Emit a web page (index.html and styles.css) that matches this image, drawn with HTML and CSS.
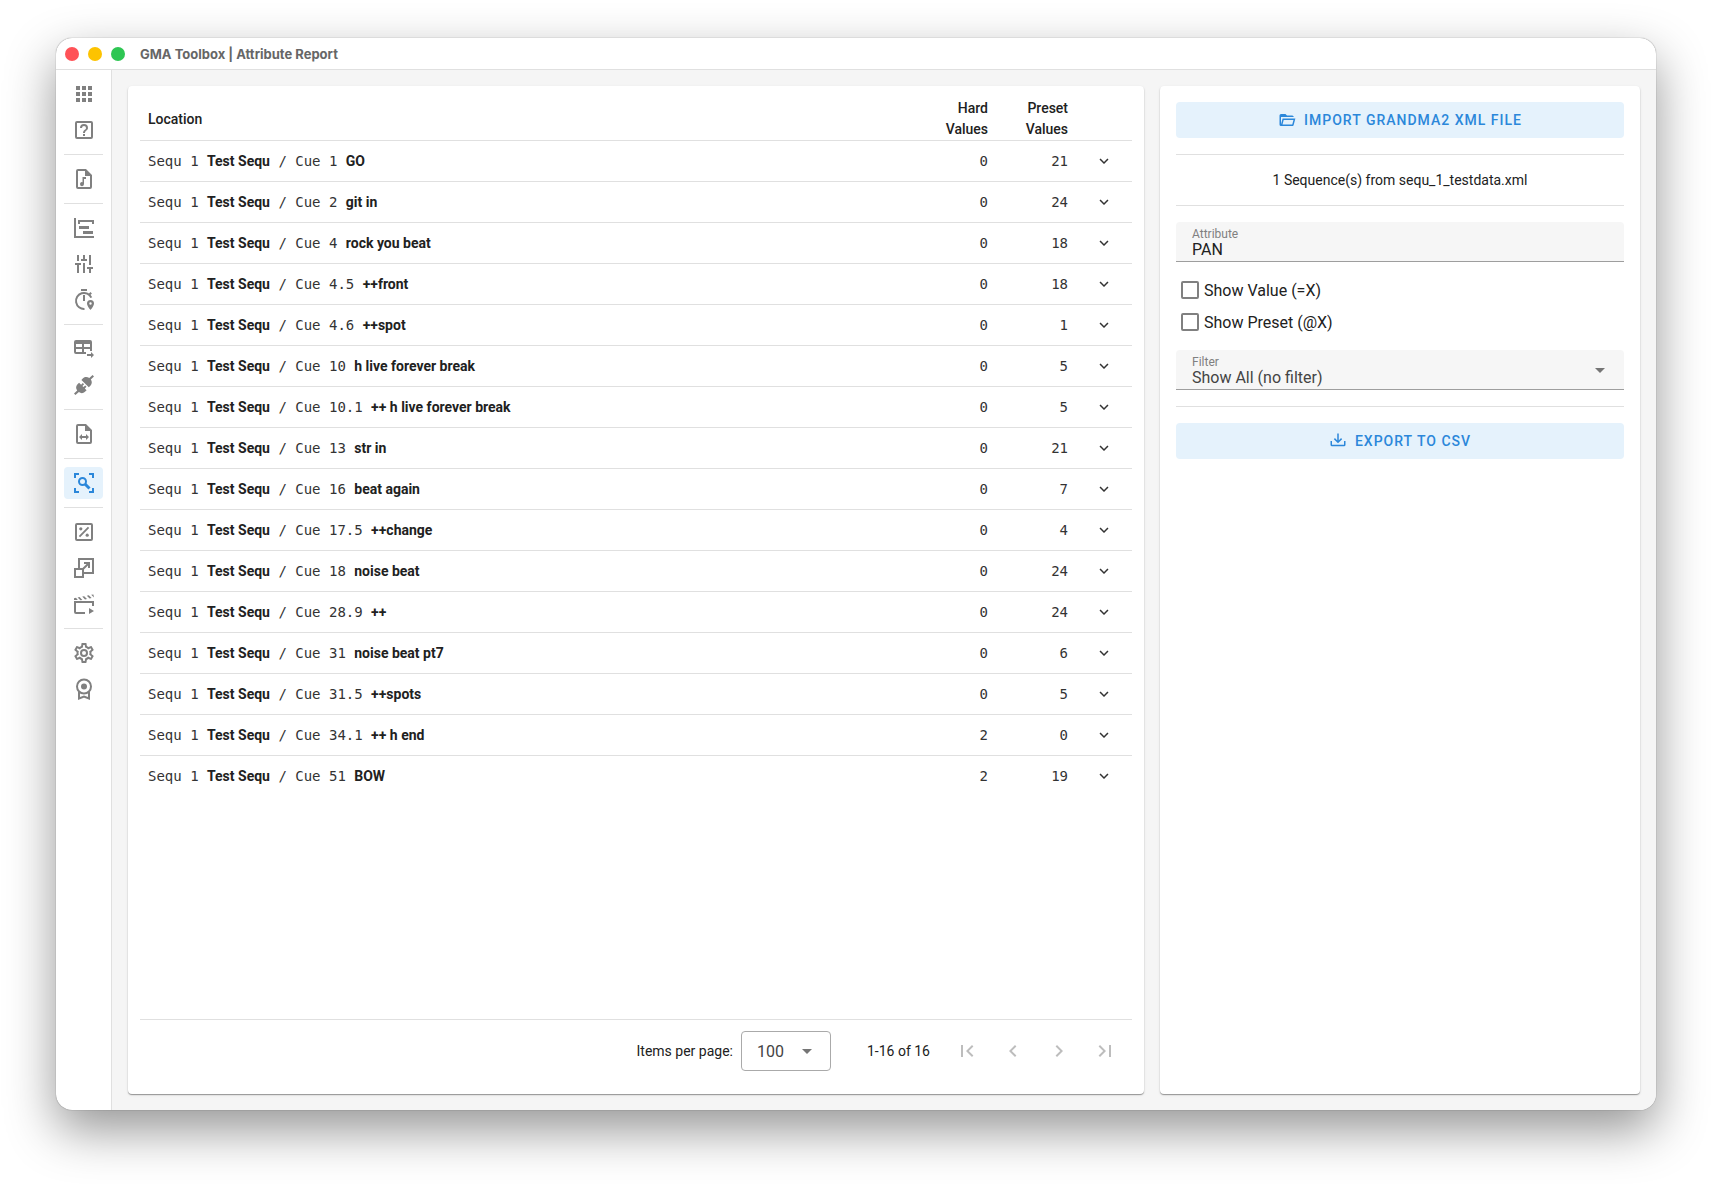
FILE: index.html
```html
<!DOCTYPE html>
<html lang="en">
<head>
    <meta charset="UTF-8">
    <meta name="viewport" content="width=device-width, initial-scale=1.0">
    <title>GMA Toolbox | Attribute Report</title>
    <link rel="stylesheet" href="styles.css">
</head>
<body>
    <svg class="sprite" aria-hidden="true">
        <symbol id="down" viewBox="0 0 24 24"><path d="M7.4 8.6 12 13.2l4.6-4.6L18 10l-6 6-6-6z"/></symbol>
        <symbol id="caret" viewBox="0 0 24 24"><path d="M7 10l5 5 5-5z"/></symbol>
    </svg>

    <div class="window">
        <header class="titlebar">
            <span class="dot red"></span>
            <span class="dot yellow"></span>
            <span class="dot green"></span>
            <h1>GMA Toolbox | Attribute Report</h1>
        </header>

        <div class="body">
            <nav class="sidebar">
                <button aria-label="Apps"><svg viewBox="0 0 24 24"><path d="M4 4h4v4H4zM10 4h4v4h-4zM16 4h4v4h-4zM4 10h4v4H4zM10 10h4v4h-4zM16 10h4v4h-4zM4 16h4v4H4zM10 16h4v4h-4zM16 16h4v4h-4z"/></svg></button>
                <button aria-label="Help"><svg viewBox="0 0 24 24"><path d="M11 18h2v-2h-2zM12 6a4 4 0 0 0-4 4h2a2 2 0 0 1 4 0c0 2-3 1.75-3 5h2c0-2.25 3-2.5 3-5a4 4 0 0 0-4-4M5 3h14a2 2 0 0 1 2 2v14a2 2 0 0 1-2 2H5a2 2 0 0 1-2-2V5a2 2 0 0 1 2-2m0 2v14h14V5z"/></svg></button>
                <hr>
                <button aria-label="Timecode"><svg viewBox="0 0 24 24"><path d="M14 2H6a2 2 0 0 0-2 2v16a2 2 0 0 0 2 2h12a2 2 0 0 0 2-2V8zm4 18H6V4h7v5h5zM10.500 10v5.200a2 2 0 1 0 1.500 1.900V12h2v-2z"/></svg></button>
                <hr>
                <button aria-label="Cue timeline"><svg viewBox="0 0 24 24"><path d="M2 2h2v18h18v2H2zM6 4h16v4h-2V6H8v2H6zM7 10h10v3H7zM11 15h10v3H11z"/></svg></button>
                <button aria-label="Faders"><svg viewBox="0 0 24 24"><path d="M5 3h2v6H5zM3 11h6v2H7v8H5v-8H3zM11 3h2v4h2v2H9V7h2zM11 11h2v10h-2zM17 3h2v10h-2zM15 15h6v2h-2v4h-2v-4h-2z"/></svg></button>
                <button aria-label="Timing"><svg viewBox="0 0 24 24"><path d="M9 1h6v2H9zM11 7h2v6h-2z"/><path class="line" d="M12.5 20.9A8 8 0 1 1 19.3 9.6M17.2 6.8l2-2"/><path d="M18.5 12a3.5 3.5 0 0 0-3.500 3.500c0 2.600 3.500 6.500 3.500 6.500s3.500-3.900 3.500-6.500a3.500 3.500 0 0 0-3.500-3.500m0 4.700a1.200 1.200 0 1 1 0-2.400 1.200 1.200 0 0 1 0 2.400"/></svg></button>
                <hr>
                <button aria-label="Layout export"><svg viewBox="0 0 24 24"><path d="M4 3h14a2 2 0 0 1 2 2v9h-2v-2h-6v3h2v2H4a2 2 0 0 1-2-2V5a2 2 0 0 1 2-2m0 4v3h6V7zm8 0v3h6V7zm-8 5v3h6v-3zM15 17h4v-2l3 3-3 3v-2h-4z"/></svg></button>
                <button aria-label="Patch"><svg viewBox="0 0 24 24"><path d="M2 20.600l3.200-3.200c-1.600-2-1.400-4.400.3-6.100l1.600-1.600 2 2 1.700-1.700 1.300 1.300-1.700 1.700 1.100 1.100 1.700-1.700 1.300 1.300-1.700 1.700 1.800 1.800-1.600 1.600c-1.700 1.700-4.200 1.800-6.100.3L3.400 22zM22 3.400l-3.200 3.200c1.500 2 1.300 4.400-.4 6.100l-1.600 1.600-7.400-7.400L11 5.300c1.700-1.700 4.400-1.600 6.300-.2L20.600 2z"/></svg></button>
                <hr>
                <button aria-label="File mapping"><svg viewBox="0 0 24 24"><path d="M14 2H6a2 2 0 0 0-2 2v16a2 2 0 0 0 2 2h12a2 2 0 0 0 2-2V8zm4 18H6V4h7v5h5zM10 12v2h4v-2l3 3-3 3v-2h-4v2l-3-3z"/></svg></button>
                <hr>
                <button class="active" aria-label="Attribute report"><svg viewBox="0 0 24 24"><path d="M2 2h5v2H4v3H2zM17 2h5v5h-2V4h-3zM2 17h2v3h3v2H2zM20 17h2v5h-5v-2h3z"/><circle class="line" cx="10.500" cy="10.500" r="3.500"/><path class="line thick" d="M13 13l4.500 4.500"/></svg></button>
                <hr>
                <button aria-label="Percent"><svg viewBox="0 0 24 24"><path d="M5 3h14a2 2 0 0 1 2 2v14a2 2 0 0 1-2 2H5a2 2 0 0 1-2-2V5a2 2 0 0 1 2-2m0 2v14h14V5zM15.900 6.800l1.300 1.300-9.100 9.100-1.300-1.300z"/><circle cx="8.800" cy="8.800" r="1.600"/><circle cx="15.200" cy="15.200" r="1.600"/></svg></button>
                <button aria-label="Resize"><svg viewBox="0 0 24 24"><path d="M6 2h16v16H12v4H2V12h4zm2 2v8h4v4h8V4zM4 14v6h6v-6zM12 6h6v6h-2V9.400l-4.300 4.300-1.400-1.400L14.600 8H12z"/></svg></button>
                <button aria-label="Movie"><svg viewBox="0 0 24 24"><path d="M2 9h20v5h-2v-3H4v9h9v2H4a2 2 0 0 1-2-2zM17 16l5 3-5 3zM2 6.200l2-.4L5.800 8H2zM5.600 5.500l2-.4 2.800 2.800-2 .4zM10.200 4.600l2-.4L15 7l-2 .4zM14.800 3.700l2-.4 2.800 2.800-2 .4zM19.200 2.800l2.200-.4.6 3z"/></svg></button>
                <hr>
                <button aria-label="Settings"><svg viewBox="0 0 24 24"><path d="M12 8a4 4 0 1 1 0 8 4 4 0 0 1 0-8m0 2a2 2 0 1 0 0 4 2 2 0 0 0 0-4m-2 12c-.25 0-.46-.18-.5-.42l-.37-2.65c-.63-.25-1.17-.59-1.69-.99l-2.49 1.01c-.22.08-.49 0-.61-.22l-2-3.46c-.13-.22-.07-.49.12-.64l2.11-1.66L4.500 12l.07-1-2.110-1.630c-.19-.15-.25-.42-.12-.64l2-3.460c.12-.22.39-.31.61-.22l2.490 1c.52-.39 1.060-.73 1.690-.98l.37-2.650c.04-.24.25-.42.5-.42h4c.25 0 .46.18.5.42l.37 2.650c.63.25 1.170.59 1.690.98l2.490-1c.22-.09.49 0 .61.22l2 3.460c.13.22.07.49-.12.64L19.430 11l.07 1-.07 1 2.110 1.630c.19.15.25.42.12.64l-2 3.460c-.12.22-.39.31-.61.22l-2.490-1c-.52.39-1.060.73-1.690.98l-.37 2.650c-.04.24-.25.42-.5.42zm1.250-18-.37 2.610c-1.200.25-2.260.89-3.030 1.780L5.440 7.350l-.75 1.300L6.800 10.200a5.600 5.600 0 0 0 0 3.600l-2.120 1.560.75 1.300 2.430-1.040c.77.88 1.820 1.520 3.010 1.760l.37 2.620h1.520l.37-2.610c1.190-.25 2.240-.89 3.010-1.770l2.430 1.040.75-1.300-2.120-1.550c.4-1.170.4-2.440 0-3.610l2.110-1.550-.75-1.300-2.410 1.040a5.400 5.400 0 0 0-3.030-1.770L12.750 4z"/></svg></button>
                <button aria-label="License"><svg viewBox="0 0 24 24"><circle class="line" cx="12" cy="9.500" r="7"/><circle cx="12" cy="9.500" r="3"/><path class="line" d="M7 15v6.500l5-2 5 2V15"/></svg></button>
            </nav>

            <main class="content">
                <section class="card report">
                    <table>
                        <thead>
                            <tr><th>Location</th><th class="num">Hard Values</th><th class="num">Preset Values</th><th class="toggle"></th></tr>
                        </thead>
                        <tbody>
                            <tr><td>Sequ 1 <b>Test Sequ</b> / Cue 1 <b>GO</b></td><td class="num">0</td><td class="num">21</td><td class="toggle"><button aria-label="Expand"><svg><use href="#down"/></svg></button></td></tr>
                            <tr><td>Sequ 1 <b>Test Sequ</b> / Cue 2 <b>git in</b></td><td class="num">0</td><td class="num">24</td><td class="toggle"><button aria-label="Expand"><svg><use href="#down"/></svg></button></td></tr>
                            <tr><td>Sequ 1 <b>Test Sequ</b> / Cue 4 <b>rock you beat</b></td><td class="num">0</td><td class="num">18</td><td class="toggle"><button aria-label="Expand"><svg><use href="#down"/></svg></button></td></tr>
                            <tr><td>Sequ 1 <b>Test Sequ</b> / Cue 4.5 <b>++front</b></td><td class="num">0</td><td class="num">18</td><td class="toggle"><button aria-label="Expand"><svg><use href="#down"/></svg></button></td></tr>
                            <tr><td>Sequ 1 <b>Test Sequ</b> / Cue 4.6 <b>++spot</b></td><td class="num">0</td><td class="num">1</td><td class="toggle"><button aria-label="Expand"><svg><use href="#down"/></svg></button></td></tr>
                            <tr><td>Sequ 1 <b>Test Sequ</b> / Cue 10 <b>h live forever break</b></td><td class="num">0</td><td class="num">5</td><td class="toggle"><button aria-label="Expand"><svg><use href="#down"/></svg></button></td></tr>
                            <tr><td>Sequ 1 <b>Test Sequ</b> / Cue 10.1 <b>++ h live forever break</b></td><td class="num">0</td><td class="num">5</td><td class="toggle"><button aria-label="Expand"><svg><use href="#down"/></svg></button></td></tr>
                            <tr><td>Sequ 1 <b>Test Sequ</b> / Cue 13 <b>str in</b></td><td class="num">0</td><td class="num">21</td><td class="toggle"><button aria-label="Expand"><svg><use href="#down"/></svg></button></td></tr>
                            <tr><td>Sequ 1 <b>Test Sequ</b> / Cue 16 <b>beat again</b></td><td class="num">0</td><td class="num">7</td><td class="toggle"><button aria-label="Expand"><svg><use href="#down"/></svg></button></td></tr>
                            <tr><td>Sequ 1 <b>Test Sequ</b> / Cue 17.5 <b>++change</b></td><td class="num">0</td><td class="num">4</td><td class="toggle"><button aria-label="Expand"><svg><use href="#down"/></svg></button></td></tr>
                            <tr><td>Sequ 1 <b>Test Sequ</b> / Cue 18 <b>noise beat</b></td><td class="num">0</td><td class="num">24</td><td class="toggle"><button aria-label="Expand"><svg><use href="#down"/></svg></button></td></tr>
                            <tr><td>Sequ 1 <b>Test Sequ</b> / Cue 28.9 <b>++</b></td><td class="num">0</td><td class="num">24</td><td class="toggle"><button aria-label="Expand"><svg><use href="#down"/></svg></button></td></tr>
                            <tr><td>Sequ 1 <b>Test Sequ</b> / Cue 31 <b>noise beat pt7</b></td><td class="num">0</td><td class="num">6</td><td class="toggle"><button aria-label="Expand"><svg><use href="#down"/></svg></button></td></tr>
                            <tr><td>Sequ 1 <b>Test Sequ</b> / Cue 31.5 <b>++spots</b></td><td class="num">0</td><td class="num">5</td><td class="toggle"><button aria-label="Expand"><svg><use href="#down"/></svg></button></td></tr>
                            <tr><td>Sequ 1 <b>Test Sequ</b> / Cue 34.1 <b>++ h end</b></td><td class="num">2</td><td class="num">0</td><td class="toggle"><button aria-label="Expand"><svg><use href="#down"/></svg></button></td></tr>
                            <tr><td>Sequ 1 <b>Test Sequ</b> / Cue 51 <b>BOW</b></td><td class="num">2</td><td class="num">19</td><td class="toggle"><button aria-label="Expand"><svg><use href="#down"/></svg></button></td></tr>
                        </tbody>
                    </table>

                    <footer class="pager">
                        <label for="per-page">Items per page:</label>
                        <div class="select outlined">
                            <select id="per-page"><option>100</option></select>
                            <svg><use href="#caret"/></svg>
                        </div>
                        <span class="range">1-16 of 16</span>
                        <button disabled aria-label="First page"><svg viewBox="0 0 24 24"><path d="M18.400 16.600 13.800 12l4.600-4.600L17 6l-6 6 6 6zM6 6h2v12H6z"/></svg></button>
                        <button disabled aria-label="Previous page"><svg viewBox="0 0 24 24"><path d="M15.400 16.600 10.800 12l4.600-4.600L14 6l-6 6 6 6z"/></svg></button>
                        <button disabled aria-label="Next page"><svg viewBox="0 0 24 24"><path d="M8.600 16.600 13.200 12 8.600 7.400 10 6l6 6-6 6z"/></svg></button>
                        <button disabled aria-label="Last page"><svg viewBox="0 0 24 24"><path d="M5.600 7.400l4.600 4.600-4.600 4.600L7 18l6-6-6-6zM16 6h2v12h-2z"/></svg></button>
                    </footer>
                </section>

                <aside class="card options">
                    <button class="action">
                        <svg viewBox="0 0 24 24"><path d="M6.100 10 4 18V8h17a2 2 0 0 0-2-2h-7l-2-2H4a2 2 0 0 0-2 2v12a2 2 0 0 0 2 2h15c.9 0 1.700-.6 1.900-1.500l2.300-8.500zM19 18H6l1.600-6h13z"/></svg>
                        IMPORT GRANDMA2 XML FILE
                    </button>
                    <hr>
                    <p>1 Sequence(s) from sequ_1_testdata.xml</p>
                    <hr>
                    <div class="field">
                        <label for="attribute">Attribute</label>
                        <input id="attribute" type="text" value="PAN">
                    </div>
                    <div class="checks">
                        <label><input type="checkbox"> Show Value (=X)</label>
                        <label><input type="checkbox"> Show Preset (@X)</label>
                    </div>
                    <div class="field select">
                        <label for="filter">Filter</label>
                        <select id="filter"><option>Show All (no filter)</option></select>
                        <svg><use href="#caret"/></svg>
                    </div>
                    <hr>
                    <button class="action">
                        <svg viewBox="0 0 24 24"><path d="M2 12h2v5h16v-5h2v5a2 2 0 0 1-2 2H4a2 2 0 0 1-2-2zM12 15l5.500-5.500-1.400-1.400-3.100 3.100V2h-2v9.200L7.900 8.100 6.500 9.500z"/></svg>
                        EXPORT TO CSV
                    </button>
                </aside>
            </main>
        </div>
    </div>
</body>
</html>
```
FILE: styles.css
```css
* {
    box-sizing: border-box;
}

body {
    display: flex;
    min-height: 100vh;
    margin: 0;
    padding: 38px 56px 74px;
    background: #fff;
    color: #212121;
    font-family: Roboto, sans-serif;
    font-size: 14px;
}

button,
input,
select {
    font: inherit;
    color: inherit;
}

button {
    display: flex;
    align-items: center;
    justify-content: center;
    padding: 0;
    border: 0;
    background: none;
}

svg {
    width: 24px;
    height: 24px;
    fill: currentColor;
}

.line {
    fill: none;
    stroke: currentColor;
    stroke-width: 2;
}

.thick {
    stroke-width: 3;
}

.sprite {
    position: absolute;
    width: 0;
    height: 0;
}

hr {
    width: 100%;
    height: 1px;
    margin: 0;
    border: 0;
    background: #e0e0e0;
}

.window {
    flex: 1;
    display: flex;
    flex-direction: column;
    border-radius: 16px;
    overflow: hidden;
    background: #fff;
    box-shadow: 0 0 1px rgba(0, 0, 0, 0.6), 0 20px 50px rgba(0, 0, 0, 0.42);
}

.titlebar {
    display: flex;
    align-items: center;
    gap: 9px;
    height: 32px;
    padding: 0 9px;
    border-bottom: 1px solid #e0e0e0;
}

.titlebar h1 {
    margin: 0 0 0 6px;
    color: #666;
    font-family: Inter, sans-serif;
    font-size: 13px;
    font-weight: 700;
}

.dot {
    width: 14px;
    height: 14px;
    border-radius: 50%;
}

.red {
    background: #ff5257;
}

.yellow {
    background: #fdc300;
}

.green {
    background: #2ec653;
}

.body {
    flex: 1;
    display: flex;
}

.sidebar {
    display: flex;
    flex-direction: column;
    align-items: center;
    width: 56px;
    padding: 6px 8px;
    border-right: 1px solid #e0e0e0;
    color: #808080;
}

.sidebar button {
    width: 100%;
    height: 32px;
    margin: 2px 0;
    border-radius: 4px;
}

.sidebar .active {
    background: #e5f2fc;
    color: #2b87da;
}

.sidebar hr {
    margin: 6px 0;
}

.content {
    flex: 1;
    display: flex;
    gap: 16px;
    padding: 16px;
    background: #f5f5f5;
}

.card {
    border-radius: 4px;
    background: #fff;
    box-shadow: 0 1px 1px rgba(0, 0, 0, 0.35), 0 1px 3px rgba(0, 0, 0, 0.1);
}

.report {
    flex: 1;
    display: flex;
    flex-direction: column;
    padding: 12px;
}

table {
    width: 100%;
    table-layout: fixed;
    border-spacing: 0;
}

th,
td {
    padding: 0 8px;
    border-bottom: 1px solid #e0e0e0;
    text-align: left;
}

th {
    height: 42px;
    font-weight: 500;
    line-height: 21px;
}

td {
    height: 41px;
    color: #333;
    font-family: "DejaVu Sans Mono", monospace;
    line-height: 20px;
}

tr:last-child td {
    height: 40px;
    border-bottom: 0;
}

td b {
    color: #212121;
    font-family: Roboto, sans-serif;
    font-weight: 700;
}

.num {
    width: 80px;
    text-align: right;
}

.toggle {
    width: 56px;
}

.toggle button {
    width: 40px;
    height: 24px;
}

.toggle svg {
    width: 18px;
    height: 18px;
}

.pager {
    display: flex;
    align-items: center;
    justify-content: flex-end;
    height: 63px;
    margin-top: auto;
    padding: 0 4px;
    border-top: 1px solid #e0e0e0;
}

.select {
    position: relative;
}

.select select {
    appearance: none;
    width: 100%;
    border: 0;
    background: none;
    color: #444;
    font-size: 16px;
}

.select svg {
    position: absolute;
    top: 8px;
    right: 12px;
    color: #757575;
    pointer-events: none;
}

.outlined {
    width: 90px;
    height: 40px;
    margin: 0 36px 0 8px;
}

.outlined select {
    height: 100%;
    padding: 0 15px;
    border: 1px solid #aaa;
    border-radius: 4px;
}

.range {
    margin-right: 14px;
}

.pager button {
    width: 46px;
    height: 40px;
    color: #bdbdbd;
}

.options {
    width: 480px;
    padding: 16px;
}

.options hr {
    margin: 16px 0;
}

.options p {
    margin: 0;
    line-height: 18px;
    text-align: center;
}

.action {
    gap: 8px;
    width: 100%;
    height: 36px;
    border-radius: 4px;
    background: #e5f2fc;
    color: #2b87da;
    font-weight: 500;
    letter-spacing: 1px;
}

.action svg {
    width: 18px;
    height: 18px;
}

.field {
    height: 40px;
    padding: 5px 16px 0;
    border-bottom: 1px solid #9e9e9e;
    border-radius: 4px 4px 0 0;
    background: #f6f6f6;
}

.field label {
    display: block;
    color: #808080;
    font-size: 12px;
    line-height: 14px;
}

.field input,
.field select {
    display: block;
    width: 100%;
    height: 18px;
    padding: 0;
    border: 0;
    background: none;
    font-size: 16px;
    line-height: 18px;
}

.checks {
    padding: 12px 5px;
}

.checks label {
    display: flex;
    align-items: center;
    gap: 5px;
    height: 32px;
    font-size: 16px;
}

.checks input {
    appearance: none;
    width: 18px;
    height: 18px;
    margin: 0;
    border: 2px solid #808080;
    border-radius: 2px;
}
```
